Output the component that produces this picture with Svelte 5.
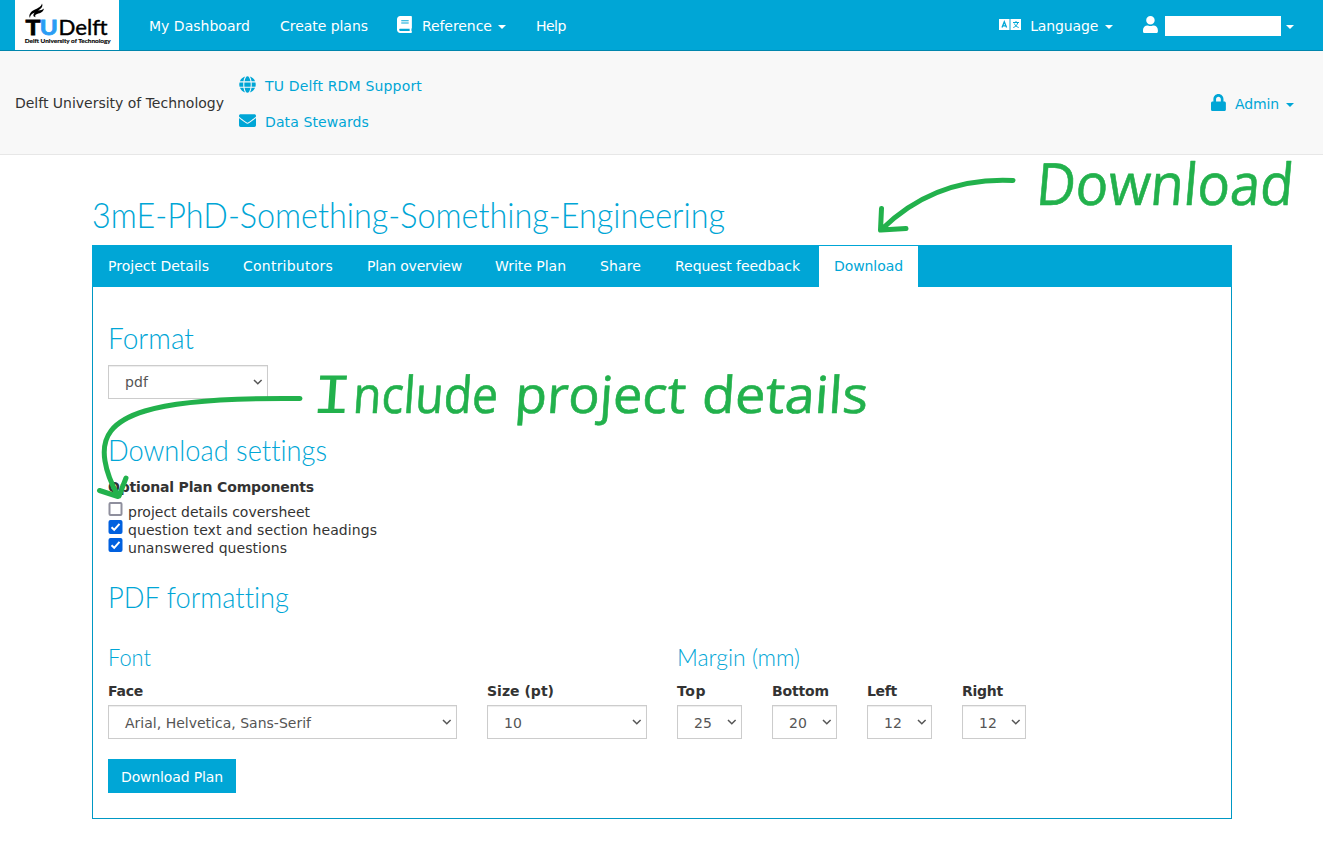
<script>
  const tabs = [
    { label: 'Project Details', text: 101, box: 135 },
    { label: 'Contributors', text: 90, box: 124 },
    { label: 'Plan overview', text: 95, box: 128 },
    { label: 'Write Plan', text: 71, box: 105 },
    { label: 'Share', text: 41, box: 75 },
    { label: 'Request feedback', text: 125, box: 159 },
    { label: 'Download', text: 69, box: 99, active: true }
  ];
  const options = [
    { label: 'project details coversheet', text: 182, on: false },
    { label: 'question text and section headings', text: 249, on: true },
    { label: 'unanswered questions', text: 159, on: true }
  ];
  const fields = [
    { label: 'Face', lw: 35, value: 'Arial, Helvetica, Sans-Serif', vw: 186, box: 349 },
    { label: 'Size (pt)', lw: 67, value: '10', vw: 18, box: 160 },
    { label: 'Top', lw: 29, value: '25', vw: 18, box: 65 },
    { label: 'Bottom', lw: 57, value: '20', vw: 18, box: 65 },
    { label: 'Left', lw: 30, value: '12', vw: 18, box: 65 },
    { label: 'Right', lw: 41, value: '12', vw: 18, box: 64 }
  ];
  const icons = {
    book: [448, 'M448 360V24c0-13.3-10.7-24-24-24H96C43 0 0 43 0 96v320c0 53 43 96 96 96h328c13.3 0 24-10.7 24-24v-16c0-7.5-3.5-14.3-8.9-18.7-4.2-15.4-4.2-59.3 0-74.7 5.4-4.3 8.9-11.1 8.9-18.6zM128 134c0-3.3 2.7-6 6-6h212c3.3 0 6 2.7 6 6v20c0 3.3-2.7 6-6 6H134c-3.3 0-6-2.7-6-6v-20zm0 64c0-3.3 2.7-6 6-6h212c3.3 0 6 2.7 6 6v20c0 3.3-2.7 6-6 6H134c-3.3 0-6-2.7-6-6v-20zm253.4 250H96c-17.7 0-32-14.3-32-32 0-17.6 14.4-32 32-32h285.4c-1.9 17.1-1.9 46.9 0 64z'],
    lock: [448, 'M400 224h-24v-72C376 68.2 307.8 0 224 0S72 68.2 72 152v72H48c-26.5 0-48 21.5-48 48v192c0 26.5 21.5 48 48 48h352c26.5 0 48-21.5 48-48V272c0-26.5-21.5-48-48-48zm-104 0H152v-72c0-39.7 32.3-72 72-72s72 32.3 72 72v72z'],
    user: [448, 'M224 256c70.7 0 128-57.3 128-128S294.7 0 224 0 96 57.3 96 128s57.3 128 128 128zm89.6 32h-16.7c-22.2 10.2-46.9 16-72.9 16s-50.6-5.8-72.9-16h-16.7C60.2 288 0 348.2 0 422.4V464c0 26.5 21.5 48 48 48h352c26.5 0 48-21.5 48-48v-41.6c0-74.2-60.2-134.4-134.4-134.4z'],
    mail: [512, 'M502.3 190.8c3.9-3.1 9.7-.2 9.7 4.7V400c0 26.5-21.5 48-48 48H48c-26.5 0-48-21.5-48-48V195.6c0-5 5.7-7.8 9.7-4.7 22.4 17.4 52.1 39.5 154.1 113.6 21.1 15.4 56.7 47.8 92.2 47.6 35.7.3 72-32.8 92.3-47.6 102-74.1 131.6-96.3 154-113.7zM256 320c23.2.4 56.6-29.2 73.4-41.4 132.7-96.3 142.8-104.7 173.4-128.7 5.8-4.5 9.2-11.5 9.2-18.9v-19c0-26.5-21.5-48-48-48H48c-26.5 0-48 21.5-48 48v19c0 7.4 3.4 14.3 9.2 18.9 30.6 23.9 40.7 32.4 173.4 128.7 16.8 12.2 50.2 41.8 73.4 41.4z'],
    globe: [496, 'M336.5 160C322 70.7 287.8 8 248 8s-74 62.7-88.5 152h177zM152 256c0 22.2 1.2 43.5 3.3 64h185.3c2.1-20.5 3.3-41.8 3.3-64s-1.2-43.5-3.3-64H155.3c-2.1 20.5-3.3 41.8-3.3 64zm324.7-96c-28.6-67.9-86.5-120.4-158-141.6 24.4 33.8 41.2 84.7 50 141.6h108zM177.2 18.4C105.8 39.6 47.8 92.1 19.3 160h108c8.7-56.9 25.5-107.8 49.9-141.6zM487.4 192H372.7c2.1 21 3.3 42.5 3.3 64s-1.2 43-3.3 64h114.6c5.5-20.5 8.6-41.8 8.6-64s-3.1-43.5-8.5-64zM120 256c0-21.5 1.2-43 3.3-64H8.6C3.2 212.5 0 233.8 0 256s3.2 43.5 8.6 64h114.6c-2-21-3.2-42.5-3.2-64zm39.5 96c14.5 89.3 48.7 152 88.5 152s74-62.7 88.5-152h-177zm159.3 141.6c71.4-21.2 129.4-73.7 158-141.6h-108c-8.8 56.9-25.6 107.8-50 141.6zM19.3 352c28.6 67.9 86.5 120.4 158 141.6-24.4-33.8-41.2-84.7-50-141.6h-108z']
  };

  // Tracks the characters so that the label fills exactly the given width.
  function fit(node, width) {
    const natural = node.getBoundingClientRect().width;
    node.style.letterSpacing = (width - natural) / node.textContent.length + 'px';
    node.parentElement.style.width = width + 'px';
  }
  // Condenses a heading horizontally to the given width.
  function squeeze(node, width) {
    node.style.transform = `scaleX(${width / node.getBoundingClientRect().width})`;
  }
</script>

{#snippet T(text, width)}<span class="fit"><span use:fit={width}>{text}</span></span>{/snippet}
{#snippet H(text, width)}<span class="squeeze" use:squeeze={width}>{text}</span>{/snippet}
{#snippet icon(name)}<svg class="icon" height="17" width={(17 * icons[name][0]) / 512} viewBox="0 0 {icons[name][0]} 512"><path fill="currentColor" d={icons[name][1]} /></svg>{/snippet}
{#snippet caret()}<svg class="caret" width="8" height="4" viewBox="0 0 8 4"><path fill="currentColor" d="M0 0h8L4 4z" /></svg>{/snippet}

<div class="page">
  <nav class="top">
    <svg class="logo" width="104" height="50" viewBox="0 0 104 50">
      <rect width="104" height="50" fill="#fff" />
      <path d="M15 18C13 15 16 11 20 9.500C23 8 26 7 27 3.500C28.500 7 25.500 9 23 10.500C26 10.500 27.500 9.800 29 8.500C28 13 24 13 21 14.500C20 15 20 16 20.500 17.200C17.500 16.500 18 14 20 12.500C16.500 13.500 15 15.500 15 18Z" />
      <g font-family="Lato" font-size="21">
        <text x="10.500" y="34.500" font-weight="bold" stroke="#000" stroke-width=".8" textLength="15" lengthAdjust="spacingAndGlyphs">T</text>
        <text x="24.800" y="34.500" font-weight="bold" fill="#2a9df4" stroke="#2a9df4" stroke-width=".8" textLength="18" lengthAdjust="spacingAndGlyphs">U</text>
        <text x="43.500" y="34.500" textLength="49" lengthAdjust="spacingAndGlyphs" stroke="#000" stroke-width=".4">Delft</text>
      </g>
      <text x="9.700" y="43.300" font-family="Lato" font-weight="700" font-size="6" stroke="#000" stroke-width=".15" textLength="86" lengthAdjust="spacingAndGlyphs">Delft University of Technology</text>
    </svg>
    <a class="n1">{@render T('My Dashboard', 101)}</a>
    <a class="n2">{@render T('Create plans', 88)}</a>
    <a class="n3">{@render icon('book')}{@render T('Reference', 70)}{@render caret()}</a>
    <a class="n2">{@render T('Help', 30)}</a>
    <div class="right">
      <a class="lang">
        <svg class="icon" width="22" height="11" viewBox="0 0 22 11">
          <path fill="#fff" d="M0 0h10.500v11H0zM11.500 0H22v11H11.500z" />
          <path fill="none" stroke="#00a6d6" stroke-width="1.300" d="M3 8.500 5.300 2.700 7.600 8.500M3.800 6.800h3" />
          <path fill="none" stroke="#00a6d6" d="M14 3.500h6M17 2v1.500M18.800 3.500C18.300 6 16.500 7.800 14.300 8.500M15.300 4.500C16 6.300 17.700 7.800 19.700 8.500" />
        </svg>
        {@render T('Language', 68)}{@render caret()}
      </a>
      <a class="account">{@render icon('user')}<span class="name"></span>{@render caret()}</a>
    </div>
  </nav>

  <header class="org">
    <div class="orgname">{@render T('Delft University of Technology', 209)}</div>
    <div class="links">
      <a>{@render icon('globe')}{@render T('TU Delft RDM Support', 157)}</a>
      <a>{@render icon('mail')}{@render T('Data Stewards', 104)}</a>
    </div>
    <a class="admin">{@render icon('lock')}{@render T('Admin', 44)}{@render caret()}</a>
  </header>

  <main>
    <h1>{@render H('3mE-PhD-Something-Something-Engineering', 633)}</h1>
    <div class="tabs">
      {#each tabs as tab}
        <a class:active={tab.active} style="width: {tab.box}px">{@render T(tab.label, tab.text)}</a>
      {/each}
    </div>
    <section class="panel">
      <h2 class="format">{@render H('Format', 86)}</h2>
      {@render select('pdf', 23, 160)}
      <h2 class="settings">{@render H('Download settings', 219)}</h2>
      <div class="label">{@render T('Optional Plan Components', 206)}</div>
      <div class="options">
        {#each options as o}
          <label>
            <svg width="15" height="15" viewBox="0 0 15 15">
              {#if o.on}
                <rect x=".5" y="0" width="14" height="14" rx="2" fill="#0060df" />
                <path d="M3.500 7.300 6.200 9.800 11.500 3.800" fill="none" stroke="#fff" stroke-width="2" />
              {:else}
                <rect x="1.500" y="1" width="12" height="12" rx="1" fill="#fff" stroke="#8f8f9d" stroke-width="2" />
              {/if}
            </svg>
            {@render T(o.label, o.text)}
          </label>
        {/each}
      </div>
      <h2 class="pdf">{@render H('PDF formatting', 181)}</h2>
      <div class="groups">
        <h3>{@render H('Font', 43)}</h3>
        <h3>{@render H('Margin (mm)', 123)}</h3>
      </div>
      <div class="fields">
        {#each fields as f}
          <div>
            <div class="label">{@render T(f.label, f.lw)}</div>
            {@render select(f.value, f.vw, f.box)}
          </div>
        {/each}
      </div>
      <button>{@render T('Download Plan', 102)}</button>
    </section>
  </main>

  <svg class="notes" width="1323" height="863" viewBox="0 0 1323 863">
    <g fill="none" stroke="#22b14c" stroke-width="5" stroke-linecap="round" stroke-linejoin="round">
      <path d="M1013 180.500C962 178 918 194 882 229M881.500 208.500 880.500 230M881 230 906 228.500" />
      <path d="M300 398.500C250 398 180 400 145 411C112 421 101 437 105 461C107 474 112 485 118 496M99.500 490.500 118 496.500M126 478 119 496" />
    </g>
    <g fill="#22b14c" stroke="#22b14c" stroke-width=".6" stroke-linejoin="round" font-family="Open Sans">
      <g transform="translate(1035 205) skewX(-5)">
        <text font-size="58" textLength="257" lengthAdjust="spacingAndGlyphs">Download</text>
      </g>
      <g transform="translate(316 413) skewX(-4)" font-size="51">
        <text font-family="Liberation Mono" font-size="57" x="-5" stroke="none" textLength="40" lengthAdjust="spacingAndGlyphs">I</text>
        <text x="36" textLength="145" lengthAdjust="spacingAndGlyphs">nclude</text>
        <text x="198" textLength="171" lengthAdjust="spacingAndGlyphs">project</text>
        <text x="385" textLength="166" lengthAdjust="spacingAndGlyphs">details</text>
      </g>
    </g>
  </svg>
</div>

{#snippet select(value, vw, box)}
  <div class="select" style="width: {box}px">
    {@render T(value, vw)}
    <svg width="10" height="6" viewBox="0 0 10 6"><path d="M1 1 4.800 4.700 8.600 1" fill="none" stroke="#555" stroke-width="1.500" /></svg>
  </div>
{/snippet}

<style>
  :global(body) { margin: 0; background: #fff; }
  .page { position: relative; width: 1323px; height: 863px; overflow: hidden; font: 14px/20px "DejaVu Sans", sans-serif; color: #333; }
  .fit { display: inline-block; white-space: nowrap; flex: none; }
  .squeeze { display: inline-block; white-space: nowrap; transform-origin: 0 50%; font-variant-ligatures: none; }
  .icon, .caret { display: block; flex: none; }
  a { display: flex; align-items: center; color: #00a6d6; }

  .top { height: 50px; display: flex; background: #00a6d6; border-bottom: 1px solid #0086ad; padding-left: 15px; }
  .top a { color: #fff; height: 52px; }
  .top .icon { margin-bottom: 3px; }
  .logo { display: block; }
  .n1, .n2, .n3 { margin-left: 30px; }
  .n3 .icon { margin-left: -1px; margin-right: 10px; }
  .caret { margin: 2px 0 0 6px; }
  .right { margin-left: auto; display: flex; padding-right: 29px; }
  .lang .icon { margin: 0 9px 3px 0; }
  .lang .caret { margin-left: 7px; }
  .account { margin-left: 30px; }
  .account .name { width: 116px; height: 20px; background: #fff; margin-left: 7px; }
  .account .caret { margin-left: 5px; }

  .org { height: 103px; display: flex; align-items: center; background: #f8f8f8; border-bottom: 1px solid #e7e7e7; padding: 0 29px 0 15px; }
  .links { margin-left: 15px; display: flex; flex-direction: column; gap: 16px; padding-top: 2px; }
  .links .icon { width: 17px; margin: 0 9px 2px 0; }
  .admin { margin-left: auto; padding-top: 2px; }
  .admin .icon { margin: 0 9px 3px 0; }
  .admin .caret { margin-left: 7px; }

  main { width: 1140px; margin: 0 0 0 92px; padding-top: 39px; }
  h1, h2, h3 { margin: 0; font-family: Lato, sans-serif; font-weight: 300; color: #00a6d6; }
  h1 { font-size: 35px; line-height: 40px; height: 51px; }
  h2 { font-size: 29px; line-height: 34px; height: 35px; }
  h3 { font-size: 23px; line-height: 28px; height: 28px; }
  .tabs { display: flex; height: 41px; background: #00a6d6; border: 1px solid #00a6d6; border-bottom: 0; box-sizing: content-box; width: 1138px; }
  .tabs a { box-sizing: border-box; padding: 0 0 1px 15px; color: #fff; height: 41px; flex: none; }
  .tabs a.active { background: #fff; color: #00a6d6; }
  .panel { box-sizing: border-box; height: 532px; border: 1px solid #0098c4; border-top: 0; padding: 34px 15px 0; }
  .format { margin-bottom: 9px; }
  .select { box-sizing: border-box; height: 34px; border: 1px solid #ccc; box-shadow: inset 0 1px 1px rgba(0, 0, 0, .075); background: #fff; display: flex; align-items: center; justify-content: space-between; padding: 0 4px 0 16px; color: #555; }
  .settings { margin: 34px 0 9px; }
  .label { font-weight: bold; line-height: 20px; height: 20px; }
  .options { padding-top: 5px; }
  .options label { display: flex; height: 18px; align-items: flex-start; line-height: 20px; }
  .options svg { display: block; margin-right: 5px; }
  .pdf { margin-top: 24px; }
  .groups { display: grid; grid-template-columns: 569px auto; margin: 28px 0 10px; }
  .fields { display: flex; gap: 30px; }
  .fields .label { margin-bottom: 4px; }
  .fields .fit { padding-top: 1px; }
  .fields .label .fit { padding-top: 0; }
  button { display: block; margin: 20px 0 0; width: 128px; height: 34px; padding: 2px 0 0; border: 0; background: #00a6d6; color: #fff; font: inherit; text-align: center; }
  .notes { position: absolute; left: 0; top: 0; pointer-events: none; }
</style>
